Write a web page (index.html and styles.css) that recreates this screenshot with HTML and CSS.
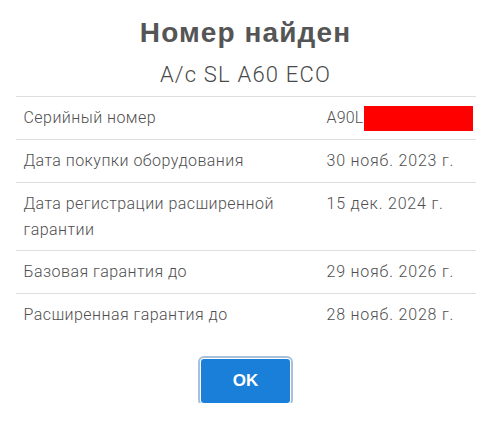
FILE: index.html
```html
<!DOCTYPE html>
<html lang="ru">
<head>
<meta charset="utf-8">
<link rel="stylesheet" href="styles.css">
</head>
<body>
<div class="dialog">
  <h1 class="title">Номер найден</h1>
  <div class="subtitle">A/c SL A60 ECO</div>
  <div class="table">
    <div class="row">
      <div class="cell label">Серийный номер</div>
      <div class="cell value serial">A90L<span class="redact"></span></div>
    </div>
    <div class="row">
      <div class="cell label">Дата покупки оборудования</div>
      <div class="cell value">30 нояб. 2023 г.</div>
    </div>
    <div class="row">
      <div class="cell label">Дата регистрации расширенной гарантии</div>
      <div class="cell value">15 дек. 2024 г.</div>
    </div>
    <div class="row">
      <div class="cell label">Базовая гарантия до</div>
      <div class="cell value">29 нояб. 2026 г.</div>
    </div>
    <div class="row last">
      <div class="cell label">Расширенная гарантия до</div>
      <div class="cell value">28 нояб. 2028 г.</div>
    </div>
  </div>
  <div class="actions">
    <button class="ok">OK</button>
  </div>
</div>
</body>
</html>
```
FILE: styles.css
```css
html, body {
  margin: 0;
  padding: 0;
  background: #fff;
}
body {
  font-family: Roboto, "Liberation Sans", Arial, sans-serif;
  font-weight: 300;
  color: #555;
}
.dialog {
  width: 460px;
  margin: 0 auto;
  padding-top: 16px;
}
.title {
  margin: 0;
  text-align: center;
  font-family: "Liberation Sans", Arial, sans-serif;
  font-size: 28px;
  font-weight: bold;
  letter-spacing: 1.1px;
  line-height: 34px;
  color: #555;
}
.subtitle {
  margin-top: 12px;
  text-align: center;
  font-size: 22px;
  letter-spacing: 1.2px;
  line-height: 26px;
  color: #4a4a4a;
  padding-bottom: 8px;
  border-bottom: 1px solid #ddd;
}
.row {
  display: grid;
  grid-template-columns: 303px 1fr;
  border-bottom: 1px solid #ddd;
}
.row.last {
  border-bottom: none;
}
.cell {
  padding: 8px;
  font-size: 16px;
  line-height: 26px;
  color: #4f4f4f;
}
.label {
  padding-bottom: 7px;
  letter-spacing: 0.45px;
}
.value {
  display: flex;
  align-items: center;
  align-self: start;
  letter-spacing: 0.8px;
}
.value.serial {
  letter-spacing: 0.2px;
}
.redact {
  display: inline-block;
  width: 109px;
  height: 25px;
  background: #f00;
}
.actions {
  display: flex;
  justify-content: center;
  padding-top: 23px;
}
.ok {
  width: 89px;
  height: 44px;
  border: none;
  border-radius: 3px;
  background: #1a7fd9;
  color: #fff;
  font-family: "Liberation Sans", Arial, sans-serif;
  font-weight: bold;
  font-size: 17px;
  box-shadow: 0 0 0 1px #fff, 0 0 0 3px #a9c0da;
}
```
